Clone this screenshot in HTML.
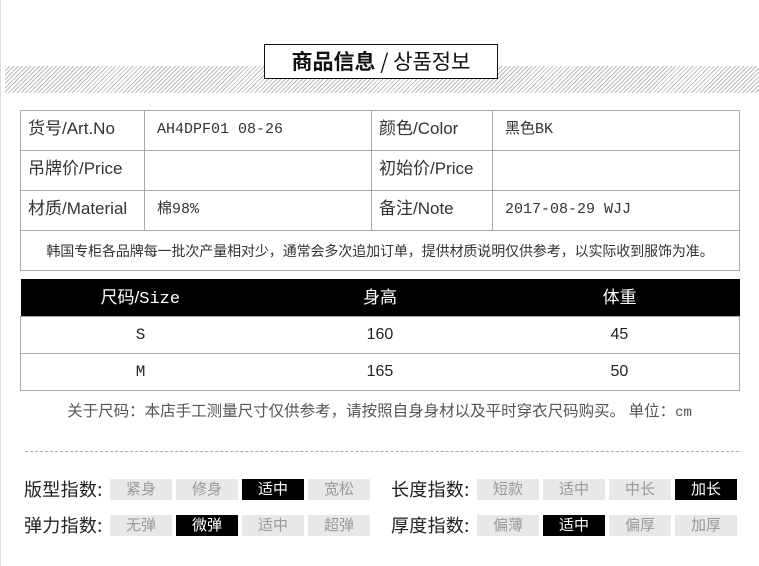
<!DOCTYPE html>
<html><head><meta charset="utf-8"><style>
*{margin:0;padding:0;box-sizing:border-box}
body{width:759px;height:566px;background:#fff;position:relative;overflow:hidden;font-family:"Liberation Sans","WenQuanYi Zen Hei","Noto Sans CJK SC",sans-serif;color:#333}
.edge{position:absolute;left:0;top:0;width:1px;height:566px;background:#ddd}
.hatch{position:absolute;left:5px;top:66px;width:754px;height:27px;background:repeating-linear-gradient(135deg,#bbb 0 1px,#fff 1px 3px)}
.title{position:absolute;left:264px;top:44px;width:234px;height:35px;border:1px solid #111;background:#fff;text-align:center;font-size:21px;line-height:32px;color:#111;font-family:"WenQuanYi Zen Hei","Noto Sans CJK SC",sans-serif}
.title b{font-weight:bold}
.t1{position:absolute;left:20px;top:110px;width:720px;border-collapse:collapse;font-size:17px;font-family:"Liberation Sans","WenQuanYi Zen Hei","Noto Sans CJK SC",sans-serif}
.t1 td{border:1px solid #aaa;height:40px;padding-left:7px;color:#333;line-height:20px;padding-bottom:3px}
.t1 td.v{padding-left:12px;font-size:15px;font-family:"Liberation Mono","Noto Sans CJK SC",monospace;padding-bottom:1px}
.t1 td.note{font-size:14px;text-align:center;padding:0;height:40px;font-family:"Noto Sans CJK SC",sans-serif;letter-spacing:-0.1px}
.t2{position:absolute;left:20px;top:279px;width:720px;border-collapse:collapse;font-size:16px;font-family:"Liberation Sans","Noto Sans CJK SC",sans-serif;table-layout:fixed}
.t2 th{background:#000;color:#fff;height:37px;font-weight:normal;font-size:17px;padding-bottom:3px}
.t2 td{border:1px solid #aaa;border-left:none;border-right:none;height:37px;text-align:center;color:#222;padding-top:1px}
.t2 tr td:first-child{border-left:1px solid #aaa}
.t2 tr td:last-child{border-right:1px solid #aaa}
.mono{font-family:"Liberation Mono","Noto Sans CJK SC",monospace}
.sn{position:absolute;left:0;width:759px;top:399px;text-align:center;font-size:15.5px;color:#555;font-family:"Noto Sans CJK SC",sans-serif}
.dash{position:absolute;left:25px;top:451px;width:714px;border-top:1px dashed #aaa}
.lb{position:absolute;font-size:18px;color:#222;font-family:"Noto Sans CJK SC",sans-serif;line-height:20px;letter-spacing:0.3px}
.b{position:absolute;width:62px;height:21px;background:#e8e8e8;color:#999;font-size:15px;text-align:center;line-height:20px;font-family:"Noto Sans CJK SC",sans-serif}
.b.on{background:#000;color:#fff}
</style></head><body>
<div class="edge"></div>
<div class="hatch"></div>
<div class="title"><b>商品信息</b> / 상품정보</div>
<table class="t1">
<tr><td style="width:124px">货号/Art.No</td><td class="v" style="width:227px">AH4DPF01 08-26</td><td style="width:121px">颜色/Color</td><td class="v">黑色BK</td></tr>
<tr><td>吊牌价/Price</td><td class="v"></td><td>初始价/Price</td><td class="v"></td></tr>
<tr><td>材质/Material</td><td class="v">棉98%</td><td>备注/Note</td><td class="v">2017-08-29 WJJ</td></tr>
<tr><td colspan="4" class="note">韩国专柜各品牌每一批次产量相对少，通常会多次追加订单，提供材质说明仅供参考，以实际收到服饰为准。</td></tr>
</table>
<table class="t2">
<tr><th>尺码/<span class="mono">Size</span></th><th>身高</th><th>体重</th></tr>
<tr><td class="mono">S</td><td>160</td><td>45</td></tr>
<tr><td class="mono">M</td><td>165</td><td>50</td></tr>
</table>
<div class="sn">关于尺码：本店手工测量尺寸仅供参考，请按照自身身材以及平时穿衣尺码购买。 单位：<span class="mono" style="font-size:14px">cm</span></div>
<div class="dash"></div>
<div class="lb" style="left:24px;top:479px">版型指数:</div>
<div class="b" style="left:110px;top:479px">紧身</div>
<div class="b" style="left:176px;top:479px">修身</div>
<div class="b on" style="left:242px;top:479px">适中</div>
<div class="b" style="left:308px;top:479px">宽松</div>
<div class="lb" style="left:391px;top:479px">长度指数:</div>
<div class="b" style="left:477px;top:479px">短款</div>
<div class="b" style="left:543px;top:479px">适中</div>
<div class="b" style="left:609px;top:479px">中长</div>
<div class="b on" style="left:675px;top:479px">加长</div>
<div class="lb" style="left:24px;top:515px">弹力指数:</div>
<div class="b" style="left:110px;top:515px">无弹</div>
<div class="b on" style="left:176px;top:515px">微弹</div>
<div class="b" style="left:242px;top:515px">适中</div>
<div class="b" style="left:308px;top:515px">超弹</div>
<div class="lb" style="left:391px;top:515px">厚度指数:</div>
<div class="b" style="left:477px;top:515px">偏薄</div>
<div class="b on" style="left:543px;top:515px">适中</div>
<div class="b" style="left:609px;top:515px">偏厚</div>
<div class="b" style="left:675px;top:515px">加厚</div>
</body></html>
